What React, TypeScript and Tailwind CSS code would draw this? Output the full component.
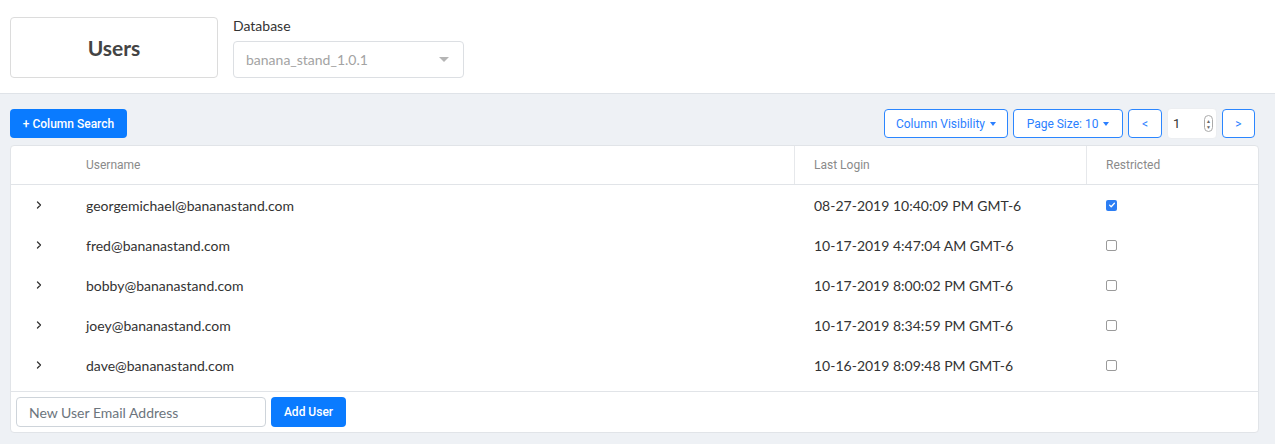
import { useState } from "react";

interface User {
  email: string;
  lastLogin: string;
  restricted: boolean;
}

const users: User[] = [
  { email: "georgemichael@bananastand.com", lastLogin: "08-27-2019 10:40:09 PM GMT-6", restricted: true },
  { email: "fred@bananastand.com", lastLogin: "10-17-2019 4:47:04 AM GMT-6", restricted: false },
  { email: "bobby@bananastand.com", lastLogin: "10-17-2019 8:00:02 PM GMT-6", restricted: false },
  { email: "joey@bananastand.com", lastLogin: "10-17-2019 8:34:59 PM GMT-6", restricted: false },
  { email: "dave@bananastand.com", lastLogin: "10-16-2019 8:09:48 PM GMT-6", restricted: false },
];

function Caret() {
  return <span className="ml-[5px] inline-block h-0 w-0 border-x-[3.5px] border-t-[4px] border-x-transparent border-t-current align-middle" />;
}

export default function App() {
  const [page, setPage] = useState(1);

  return (
    <div className="flex h-[444px] flex-col bg-[#eef1f5] font-['Lato',sans-serif] text-[#333]">
      {/* ── Top bar ── */}
      <div className="flex h-[94px] shrink-0 items-start gap-4 border-b border-[#dfe3e8] bg-white px-[10px] pt-[17px]">
        <div className="flex h-[61px] w-[208px] items-center justify-center rounded border border-[#dcdcdc]">
          <span className="text-[21px] font-bold text-[#444]">Users</span>
        </div>
        <div className="-ml-px flex flex-col">
          <label className="mb-[6px] text-[14px] leading-[18px] text-[#333]">Database</label>
          <div className="flex h-[37px] w-[231px] items-center justify-between rounded border border-[#dcdfe3] pl-[12px] pr-[14px]">
            <span className="text-[14px] text-[#a3a3a3]">banana_stand_1.0.1</span>
            <span className="inline-block h-0 w-0 border-x-[5px] border-t-[5px] border-x-transparent border-t-[#b5b5b5]" />
          </div>
        </div>
      </div>

      {/* ── Content ── */}
      <div className="flex flex-col px-[10px] pt-[14px] font-['Roboto',sans-serif]">
        <div className="flex h-[31px] items-center justify-between">
          <button className="h-[29px] w-[117px] rounded bg-[#0a7bff] text-[12px] font-medium text-white">
            + Column Search
          </button>
          <div className="mr-[10px] flex items-center gap-[5px] text-[12px] text-[#2b7fff]">
            <button className="flex h-[29px] w-[124px] items-center justify-center rounded border border-[#2b86ff] bg-white">
              Column Visibility<Caret />
            </button>
            <button className="flex h-[29px] w-[110px] items-center justify-center rounded border border-[#2b86ff] bg-white">
              Page Size: 10<Caret />
            </button>
            <button className="flex h-[29px] w-[34px] items-center justify-center rounded border border-[#2b86ff] bg-white">
              &lt;
            </button>
            <div className="flex h-[31px] w-[50px] items-center justify-between rounded border border-[#eceef1] bg-white pl-[5px] pr-[3px] text-[#333]">
              <span className="text-[13px]">{page}</span>
              <button onClick={() => setPage(page + 1)} className="flex h-[17px] w-[9px] flex-col items-center justify-center rounded-full border border-[#aaa] text-[5px] leading-[6px] text-[#666]">
                <span>▲</span>
                <span>▼</span>
              </button>
            </div>
            <button className="flex h-[29px] w-[33px] items-center justify-center rounded border border-[#2b86ff] bg-white">
              &gt;
            </button>
          </div>
        </div>

        {/* ── Table card ── */}
        <div className="mt-[6px] mr-[6px] overflow-hidden rounded border border-[#e1e4e8] bg-white">
          <div className="flex h-[39px] border-b border-[#e1e4e8] text-[12px] text-[#8a8a8a]">
            <div className="w-[75px]" />
            <div className="flex flex-1 items-center">Username</div>
            <div className="flex w-[292px] items-center border-l border-[#e6e8eb] pl-[19px]">Last Login</div>
            <div className="flex w-[172px] items-center border-l border-[#e6e8eb] pl-[19px]">Restricted</div>
          </div>
          {users.map((u) => (
            <div key={u.email} className="flex h-[40px] items-center font-['Lato',sans-serif] text-[14px] text-[#333]">
              <div className="w-[75px] pl-[25px]">
                <svg viewBox="0 0 6 8" className="h-[8px] w-[6px]" fill="none" stroke="#333" strokeWidth={1.3} strokeLinecap="round" strokeLinejoin="round">
                  <path d="M1.5 1l3 3-3 3" />
                </svg>
              </div>
              <div className="flex-1">{u.email}</div>
              <div className="w-[292px] pl-[20px]">{u.lastLogin}</div>
              <div className="w-[172px] pl-[20px]">
                {u.restricted ? (
                  <span className="flex h-[11px] w-[11px] items-center justify-center rounded-[2px] bg-[#2c7ef4]">
                    <svg viewBox="0 0 10 10" className="h-[8px] w-[8px]" fill="none" stroke="white" strokeWidth={1.6} strokeLinecap="round" strokeLinejoin="round">
                      <path d="M2 5.2l2 2L8 2.8" />
                    </svg>
                  </span>
                ) : (
                  <span className="block h-[11px] w-[11px] rounded-[2px] border border-[#9a9a9a] bg-white" />
                )}
              </div>
            </div>
          ))}
          <div className="mt-[6px] flex h-[41px] items-center gap-[5px] border-t border-[#e1e4e8] px-[5px]">
            <input
              placeholder="New User Email Address"
              className="h-[30px] w-[250px] rounded border border-[#ced4da] px-[12px] font-['Lato',sans-serif] text-[14px] text-[#333] outline-none placeholder:text-[#6c757d]"
            />
            <button className="h-[30px] w-[75px] rounded bg-[#0a7bff] text-[12px] font-medium text-white">Add User</button>
          </div>
        </div>
      </div>
    </div>
  );
}
